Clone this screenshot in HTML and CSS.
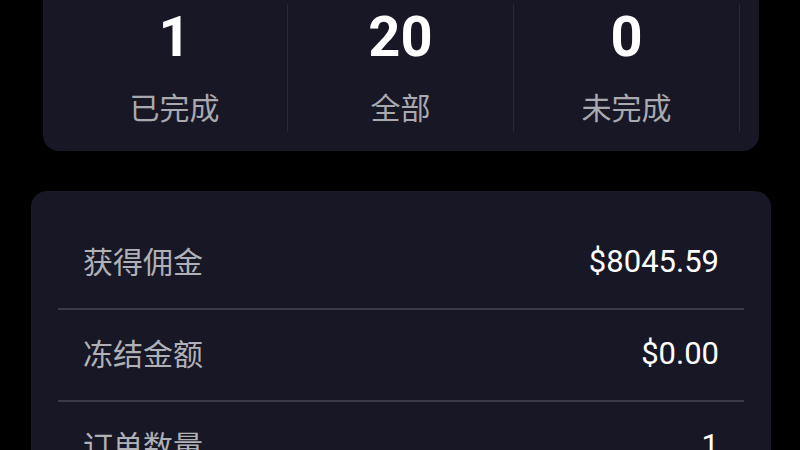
FILE: index.html
```html
<!DOCTYPE html>
<html lang="zh-CN">
<head>
<meta charset="utf-8">
<title>统计</title>
<link rel="stylesheet" href="styles.css">
</head>
<body>
<div class="page">
  <section class="stats">
    <div class="stat">
      <div class="stat-num">1</div>
      <div class="stat-label">已完成</div>
    </div>
    <div class="stat">
      <div class="stat-num">20</div>
      <div class="stat-label">全部</div>
    </div>
    <div class="stat">
      <div class="stat-num">0</div>
      <div class="stat-label">未完成</div>
    </div>
  </section>
  <section class="info">
    <div class="row">
      <span class="row-label">获得佣金</span>
      <span class="row-value">$8045.59</span>
    </div>
    <div class="row">
      <span class="row-label">冻结金额</span>
      <span class="row-value">$0.00</span>
    </div>
    <div class="row">
      <span class="row-label">订单数量</span>
      <span class="row-value">1</span>
    </div>
  </section>
</div>
</body>
</html>
```
FILE: styles.css
```css
html, body {
  margin: 0;
  padding: 0;
  background: #000;
}
body {
  font-family: Roboto, "Noto Sans CJK SC", sans-serif;
  color: #fff;
}
.page {
  padding: 0 29px 0 31px;
}
.stats {
  margin: 0 12px;
  background: #181725;
  border-radius: 0 0 16px 16px;
  padding: 4px 19px 19px;
  display: grid;
  grid-template-columns: repeat(3, 1fr);
}
.stat {
  border-right: 1px solid #2a2938;
  display: flex;
  flex-direction: column;
  align-items: center;
  padding: 5px 0 11px;
}
.stat-num {
  font-family: Roboto, sans-serif;
  font-weight: 700;
  font-size: 56px;
  line-height: 56px;
  color: #fff;
}
.stat-label {
  margin-top: 26px;
  font-family: "Noto Sans CJK SC", sans-serif;
  font-size: 30px;
  line-height: 30px;
  color: #a9a9b0;
}
.info {
  margin-top: 40px;
  background: #181725;
  border-radius: 16px;
  padding: 27px 27px 0;
}
.row {
  box-sizing: border-box;
  height: 92px;
  display: flex;
  align-items: center;
  justify-content: space-between;
  padding: 0 25px 6px;
  border-bottom: 2px solid #3a3948;
}
.row-label {
  font-family: "Noto Sans CJK SC", sans-serif;
  font-size: 30px;
  line-height: 30px;
  color: #b0b0b7;
}
.row-value {
  padding-top: 3px;
  font-family: Roboto, sans-serif;
  font-weight: 400;
  font-size: 31px;
  line-height: 31px;
  color: #fff;
}
```
